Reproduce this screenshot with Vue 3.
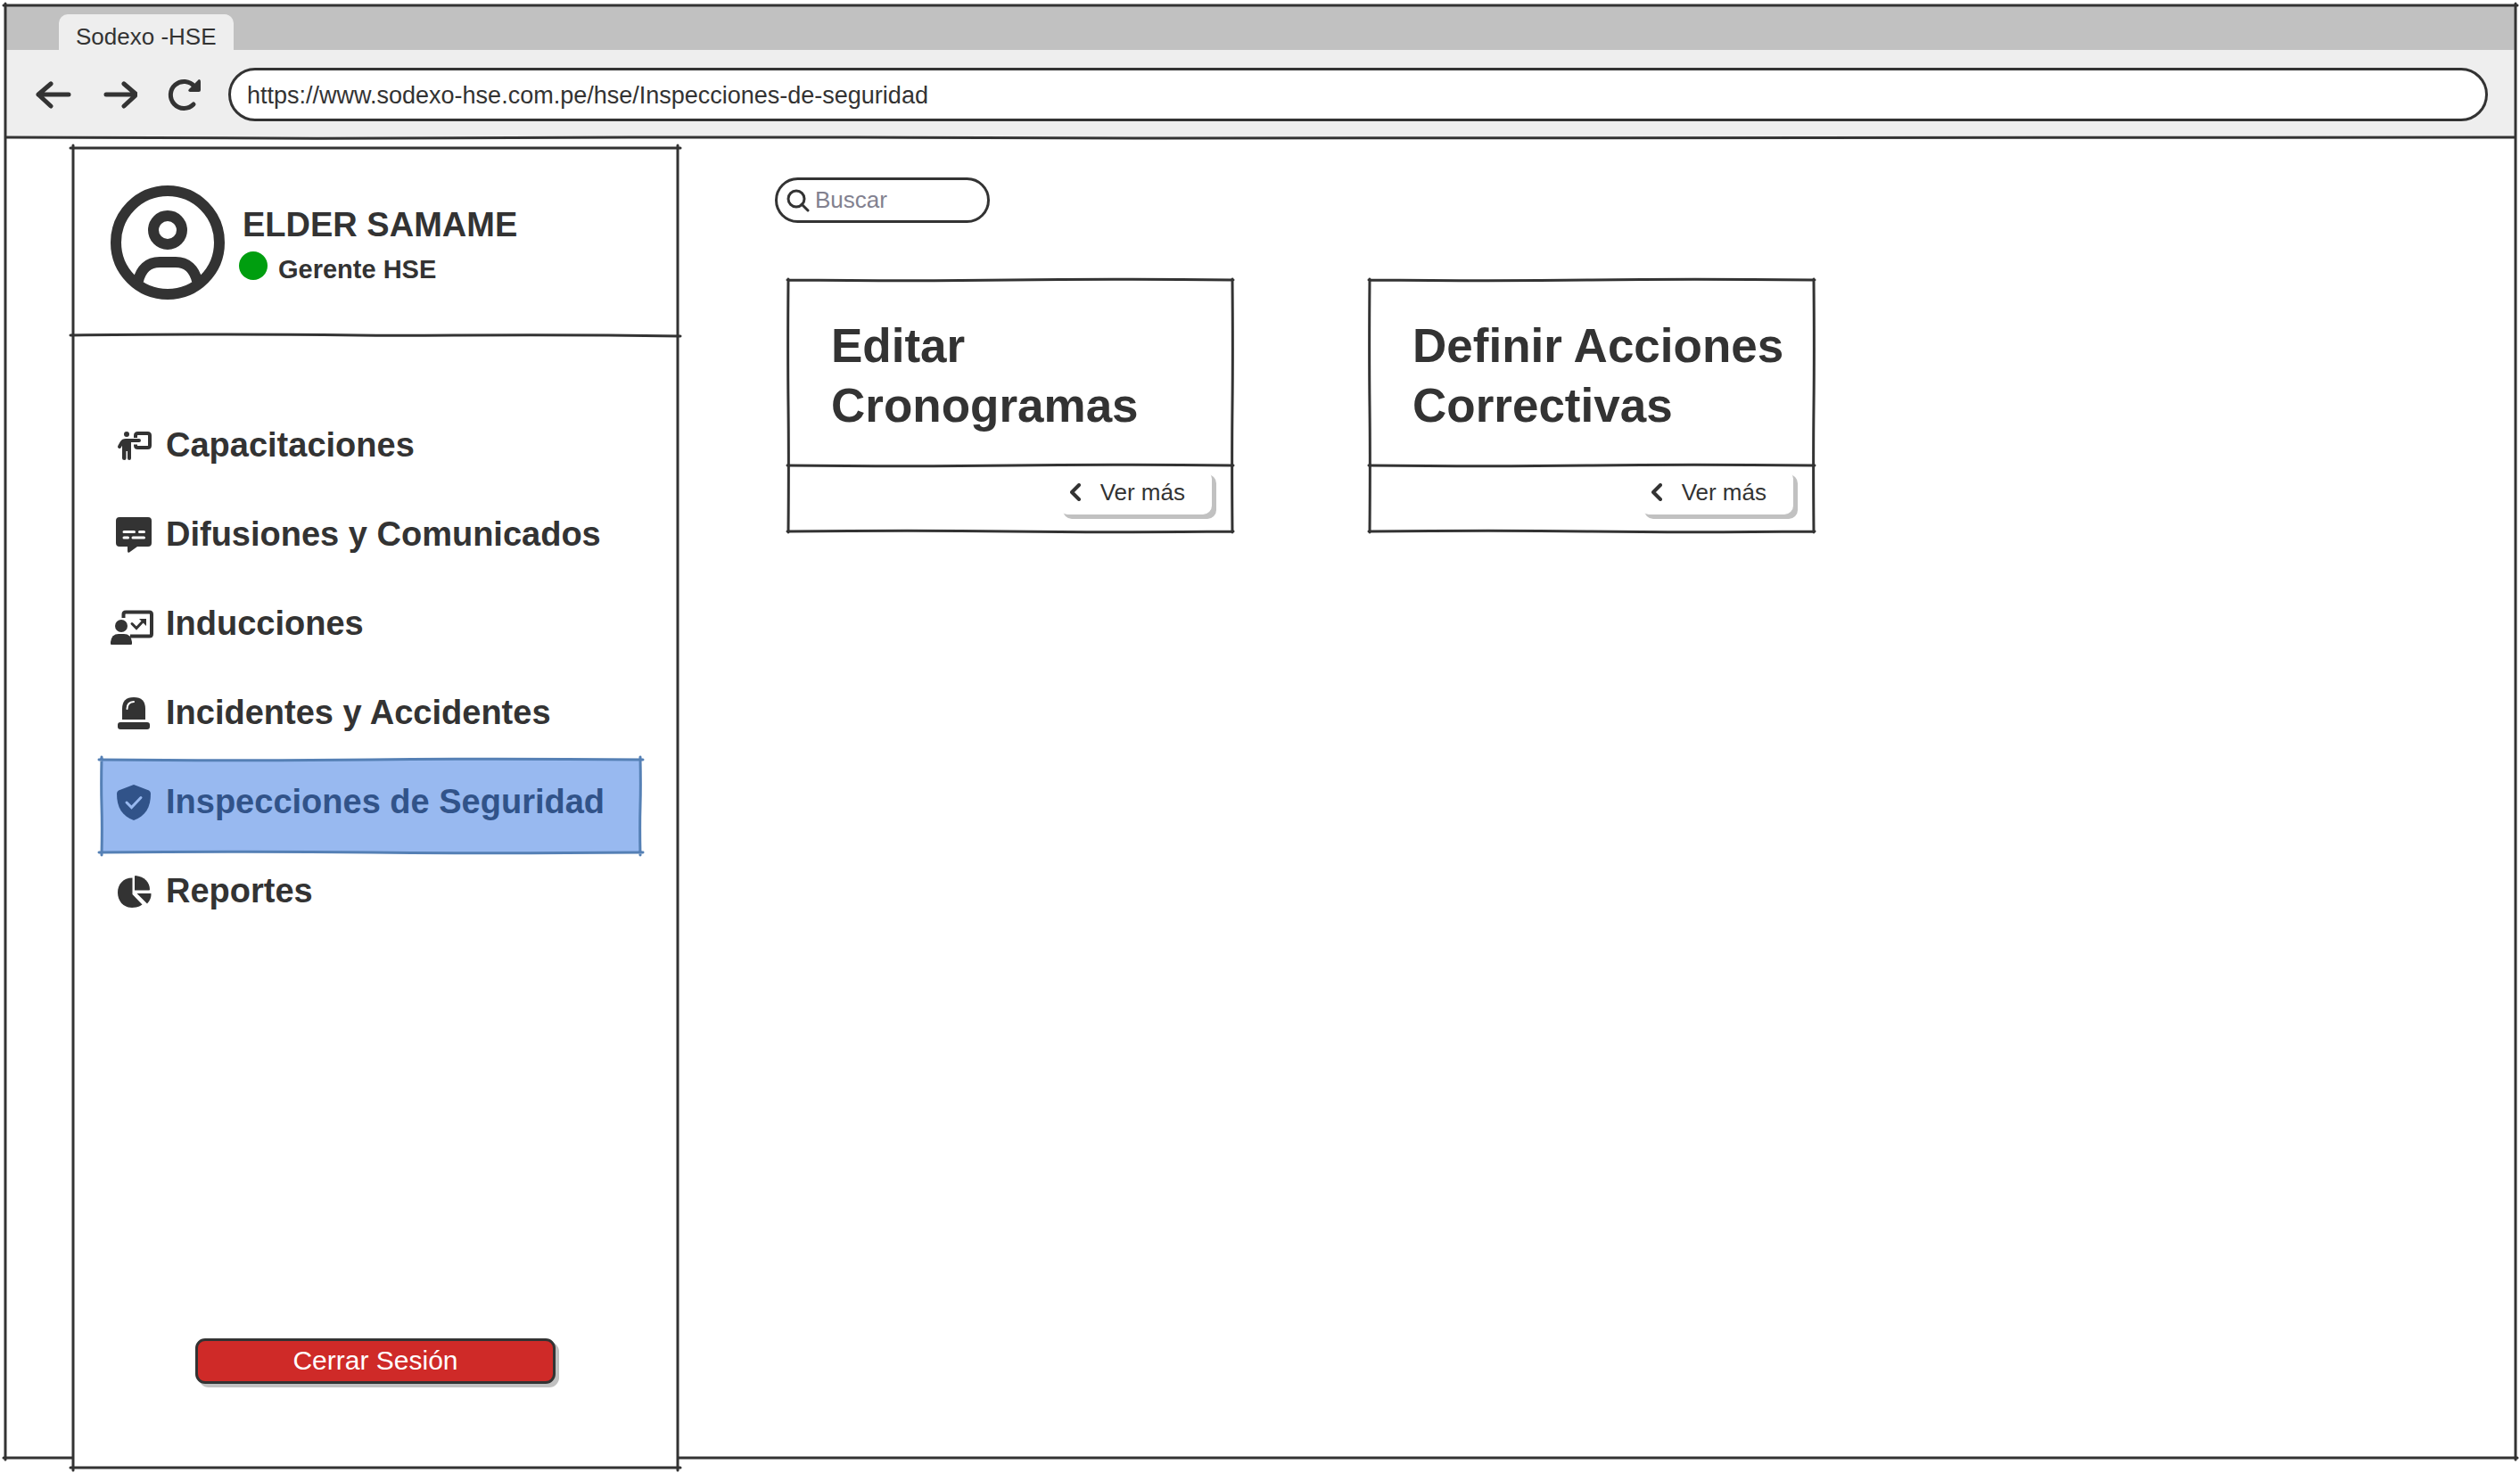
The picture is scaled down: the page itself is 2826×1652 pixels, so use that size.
<script setup>
import { h, ref } from 'vue'

const address = ref('https://www.sodexo-hse.com.pe/hse/Inspecciones-de-seguridad')
const query = ref('')

const menu = [
  { id: 'training', label: 'Capacitaciones' },
  { id: 'news', label: 'Difusiones y Comunicados' },
  { id: 'induction', label: 'Inducciones' },
  { id: 'incidents', label: 'Incidentes y Accidentes' },
  { id: 'inspections', label: 'Inspecciones de Seguridad', active: true },
  { id: 'reports', label: 'Reportes' },
]

const cards = [
  { id: 'schedule', title: ['Editar', 'Cronogramas'] },
  { id: 'actions', title: ['Definir Acciones', 'Correctivas'] },
]

// Hand-drawn outline: four slightly bowed strokes that cross at the corners.
function SketchFrame({ w, h: height, cross }) {
  const across = (y, bow) =>
    `M${-cross} ${y}C${w * 0.2} ${y + bow} ${w * 0.35} ${y + bow} ${w / 2} ${y}S${w * 0.8} ${y - bow} ${w + cross} ${y}`
  const down = (x, bow) =>
    `M${x} ${-cross}C${x + bow} ${height * 0.2} ${x + bow} ${height * 0.35} ${x} ${height / 2}S${x - bow} ${height * 0.8} ${x} ${height + cross}`
  return h(
    'svg',
    { viewBox: `0 0 ${w} ${height}`, preserveAspectRatio: 'none', 'aria-hidden': 'true' },
    [
      h('path', {
        d: across(0, 1) + across(height, -1) + down(0, -0.5) + down(w, 0.5),
        fill: 'none',
        stroke: 'currentColor',
        'stroke-width': 3,
        'stroke-linecap': 'round',
        'vector-effect': 'non-scaling-stroke',
      }),
    ],
  )
}
SketchFrame.props = { w: Number, h: Number, cross: Number }
</script>

<template>
  <div class="window">
    <SketchFrame class="frame" :w="2815" :h="1628" :cross="2" />

    <header class="chrome">
      <div class="tabs">
        <div class="tab">Sodexo -HSE</div>
      </div>
      <div class="toolbar">
        <div class="history">
          <button type="button" aria-label="Atrás">
            <svg viewBox="0 0 40 40"><path d="M37 20H3M17 8L3 20L17 33" fill="none" stroke="currentColor" stroke-width="5" stroke-linecap="round" stroke-linejoin="round" /></svg>
          </button>
          <button type="button" aria-label="Adelante">
            <svg viewBox="0 0 40 40"><path d="M5 20H39M25 8L39 20L25 33" fill="none" stroke="currentColor" stroke-width="5" stroke-linecap="round" stroke-linejoin="round" /></svg>
          </button>
          <button type="button" aria-label="Recargar">
            <svg viewBox="0 0 40 40">
              <path d="M29 31A15 15 0 1 1 30 11" fill="none" stroke="currentColor" stroke-width="5" stroke-linecap="round" />
              <path d="M35 3Q37 3 37 6V15Q37 17 35 17H25Q22 16 24 14L34 4Z" fill="currentColor" />
            </svg>
          </button>
        </div>
        <input v-model="address" class="address" type="text" aria-label="Dirección" />
      </div>
      <svg class="rule" viewBox="0 0 2815 4" preserveAspectRatio="none" aria-hidden="true">
        <path d="M0 2C250 4 450 3 700 2S1000 3 1300 3S2100 1 2815 2" fill="none" stroke="currentColor" stroke-width="3" />
      </svg>
    </header>

    <div class="body">
      <aside class="sidebar">
        <SketchFrame class="frame" :w="678" :h="1479" :cross="3" />

        <div class="profile">
          <svg class="avatar" viewBox="0 0 128 128" fill="none" stroke="currentColor" stroke-width="12" aria-hidden="true">
            <circle cx="64" cy="64" r="58" />
            <circle cx="64" cy="50" r="16" />
            <path d="M31 107C34 94 42 86 55 86H73C86 86 94 94 97 107" />
          </svg>
          <div class="identity">
            <div class="name">ELDER SAMAME</div>
            <div class="role"><span class="status"></span><span class="role-text">Gerente HSE</span></div>
          </div>
          <svg class="rule" viewBox="0 0 678 4" preserveAspectRatio="none" aria-hidden="true">
            <path d="M-3 2C120 0 220 1 320 2S500 0 681 3" fill="none" stroke="currentColor" stroke-width="3" stroke-linecap="round" />
          </svg>
        </div>

        <nav class="menu">
          <a v-for="item in menu" :key="item.id" href="#" class="item" :class="{ active: item.active }">
            <SketchFrame v-if="item.active" class="frame marker" :w="604" :h="104" :cross="3" />
            <svg class="icon" viewBox="0 0 52 48" fill="currentColor" aria-hidden="true">
              <template v-if="item.id === 'training'">
                <circle cx="18" cy="11" r="3" />
                <path d="M28 15V12.5Q28 10 30.5 10H41.5Q44 10 44 12.5V23.5Q44 26 41.5 26H30.5Q28 26 28 23.5V22.5" fill="none" stroke="currentColor" stroke-width="4" />
                <path d="M32 18H17Q14 18 12.5 20.5L10 25" fill="none" stroke="currentColor" stroke-width="4" stroke-linecap="round" stroke-linejoin="round" />
                <path d="M13 18H23V38Q23 40 21 40Q19 40 19 38V30H17.5V38Q17.5 40 15.5 40Q13 40 13 38Z" />
              </template>
              <template v-else-if="item.id === 'news'">
                <path d="M10 4H42Q46 4 46 8V33Q46 37 42 37H30L21 43.5Q19 44.5 19 42V37H10Q6 37 6 33V8Q6 4 10 4Z" />
                <path d="M15 20.5H26.5M32.5 20.5H37.5M15 27H19.5M25 27H37.5" fill="none" stroke="#fff" stroke-width="3" stroke-linecap="round" />
              </template>
              <template v-else-if="item.id === 'induction'">
                <path d="M14.5 17V13Q14.5 10.5 17 10.5H43.5Q46 10.5 46 13V35Q46 37.5 43.5 37.5H22" fill="none" stroke="currentColor" stroke-width="4" />
                <circle cx="12" cy="26" r="7" />
                <path d="M0 46V44Q1 35 9 35H15Q23 35 24 44V46Q24 47 23 47H1Q0 47 0 46Z" />
                <path d="M24 23.5L29 28.5L37 20" fill="none" stroke="currentColor" stroke-width="3" stroke-linecap="round" />
                <path d="M32 18H40V26Z" />
              </template>
              <template v-else-if="item.id === 'incidents'">
                <path d="M13 31V19Q13 6 26 6Q39 6 39 19V31Z" />
                <rect x="8" y="34" width="36" height="8" rx="3" />
                <path d="M18.5 19Q18.5 11.5 26 11" fill="none" stroke="#fff" stroke-width="2" stroke-linecap="round" />
              </template>
              <template v-else-if="item.id === 'inspections'">
                <path d="M26 4L43 10.5Q45 11.5 45 14C45 30 39 39 26 44C13 39 7 30 7 14Q7 11.5 9 10.5Z" />
                <path d="M18 24L23.5 29.5L34 18.5" fill="none" stroke="#98b9f0" stroke-width="3" stroke-linecap="round" />
              </template>
              <template v-else>
                <path d="M24.5 8.5C14 8.5 8 16 8 25C8 34 14 42 24 42Q31 42 35.5 38.5L24.5 27Z" />
                <path d="M27 22.5V7Q27 6 28 6C38 7 44 14 44 21.5Q44 22.5 43 22.5Z" />
                <path d="M29.5 26H45.5Q46 32 41 37.5Z" />
              </template>
            </svg>
            <span>{{ item.label }}</span>
          </a>
        </nav>

        <button type="button" class="logout">Cerrar Sesión</button>
      </aside>

      <main class="content">
        <label class="search">
          <svg viewBox="0 0 26 26" aria-hidden="true">
            <path d="M17 17L24 24M20 11A9 9 0 1 1 2 11A9 9 0 1 1 20 11Z" fill="none" stroke="currentColor" stroke-width="3" stroke-linecap="round" />
          </svg>
          <input v-model="query" type="text" placeholder="Buscar" aria-label="Buscar" />
        </label>

        <div class="cards">
          <section v-for="card in cards" :key="card.id" class="card">
            <SketchFrame class="frame" :w="498" :h="282" :cross="1" />
            <h2 class="title"><span v-for="line in card.title" :key="line">{{ line }}</span></h2>
            <div class="actions">
              <svg class="rule" viewBox="0 0 498 4" preserveAspectRatio="none" aria-hidden="true">
                <path d="M-1 2C80 3 180 3 250 2S400 1 499 2" fill="none" stroke="currentColor" stroke-width="3" stroke-linecap="round" />
              </svg>
              <button type="button" class="more">
                <svg viewBox="0 0 12 20" aria-hidden="true"><path d="M10 2L2 10L10 18" fill="none" stroke="currentColor" stroke-width="4" stroke-linecap="round" stroke-linejoin="round" /></svg>
                <span>Ver más</span>
              </button>
            </div>
          </section>
        </div>
      </main>
    </div>
  </div>
</template>

<style>
body {
  margin: 0;
  background: #fff;
}
</style>

<style scoped>
* {
  box-sizing: border-box;
}

.window {
  position: relative;
  display: flex;
  flex-direction: column;
  min-height: calc(100vh - 23px);
  margin: 6px 5px 17px 6px;
  color: #333;
  font-family: "Liberation Sans", Arial, sans-serif;
  font-size: 26px;
}

button,
input {
  font: inherit;
  color: inherit;
}

button {
  padding: 0;
  border: 0;
  background: none;
}

.frame {
  position: absolute;
  inset: 0;
  z-index: 0;
  width: 100%;
  height: 100%;
  overflow: visible;
  pointer-events: none;
}

.window > .frame {
  z-index: 1;
}

.rule {
  position: absolute;
  left: 0;
  width: 100%;
  height: 4px;
  overflow: visible;
  pointer-events: none;
}

/* Browser chrome */
.chrome {
  position: relative;
  background: #eee;
}

.chrome > .rule {
  bottom: -2px;
}

.tabs {
  display: flex;
  align-items: flex-end;
  height: 50px;
  padding-left: 60px;
  background: #c1c1c1;
}

.tab {
  height: 40px;
  padding: 0 19px;
  border-radius: 10px 10px 0 0;
  background: #eee;
  line-height: 50px;
}

.toolbar {
  display: flex;
  align-items: center;
  gap: 28px;
  height: 98px;
  padding: 2px 31px 0 34px;
}

.history {
  display: flex;
  gap: 34px;
}

.history button {
  width: 40px;
  height: 40px;
}

.history svg {
  display: block;
}

.address {
  flex: 1;
  min-width: 0;
  height: 60px;
  padding: 2px 18px 0;
  border: 3px solid #333;
  border-radius: 30px;
  background: #fff;
  font-size: 27px;
}

/* Page */
.body {
  flex: 1;
  display: flex;
}

.sidebar {
  position: relative;
  z-index: 2;
  flex: none;
  display: flex;
  flex-direction: column;
  width: 678px;
  margin: 12px 0 -11px 76px;
  background: #fff;
}

.profile {
  position: relative;
  display: flex;
  align-items: center;
  gap: 16px;
  height: 210px;
  padding: 2px 0 0 42px;
}

.profile > .rule {
  bottom: -2px;
}

.avatar {
  width: 128px;
  height: 128px;
}

.identity {
  padding-top: 4px;
}

.name {
  margin-bottom: 8px;
  padding-left: 4px;
  font-size: 38px;
  font-weight: bold;
  line-height: 44px;
}

.role {
  display: flex;
  align-items: flex-start;
  gap: 12px;
  font-size: 29px;
  font-weight: bold;
}

.role-text {
  padding-top: 4px;
  line-height: 32px;
}

.status {
  width: 32px;
  height: 32px;
  border-radius: 50%;
  background: #009e0f;
}

.menu {
  display: flex;
  flex-direction: column;
  margin: 76px 42px 40px 32px;
}

.item {
  position: relative;
  display: flex;
  align-items: flex-start;
  gap: 10px;
  height: 100px;
  padding: 24px 0 0 10px;
  color: inherit;
  font-size: 38px;
  font-weight: bold;
  line-height: 46px;
  text-decoration: none;
  white-space: nowrap;
}

.item.active {
  color: #315389;
}

.marker {
  height: 104px;
  background: #98b9f0;
  color: #5580b5;
}

.icon {
  position: relative;
  flex: none;
  width: 52px;
  height: 48px;
}

.item span {
  position: relative;
}

.logout {
  align-self: center;
  width: 404px;
  height: 51px;
  margin: auto 0 94px;
  padding-bottom: 2px;
  border: 3px solid #333;
  border-radius: 11px;
  background: #cf2a28;
  box-shadow: 4px 4px 0 #c1c1c1;
  color: #fff;
  font-size: 30px;
}

.content {
  flex: 1;
  min-width: 0;
  padding: 45px 40px 40px 109px;
}

.search {
  display: flex;
  align-items: center;
  gap: 6px;
  width: 241px;
  height: 51px;
  padding: 0 16px 0 10px;
  border: 3px solid #333;
  border-radius: 26px;
}

.search svg {
  flex: none;
  width: 26px;
  height: 26px;
}

.search input {
  flex: 1;
  min-width: 0;
  padding: 0;
  border: 0;
  outline: 0;
  background: none;
}

.search input::placeholder {
  color: #82818f;
  opacity: 1;
}

.cards {
  display: flex;
  flex-wrap: wrap;
  gap: 64px 154px;
  margin: 64px 0 0 15px;
}

.card {
  position: relative;
  width: 498px;
}

.title {
  display: flex;
  flex-direction: column;
  height: 208px;
  margin: 0;
  padding: 40px 0 0 48px;
  font-size: 53px;
  line-height: 67px;
  white-space: nowrap;
}

.actions {
  position: relative;
  display: flex;
  align-items: flex-start;
  justify-content: flex-end;
  height: 74px;
  padding: 5px 23px 0;
}

.actions > .rule {
  top: -2px;
}

.more {
  display: flex;
  align-items: center;
  gap: 22px;
  height: 50px;
  padding: 0 30px 0 13px;
  border-radius: 10px;
  background: #fff;
  box-shadow: 5px 5px 0 #c1c1c1;
}

.more svg {
  width: 12px;
  height: 20px;
}
</style>
